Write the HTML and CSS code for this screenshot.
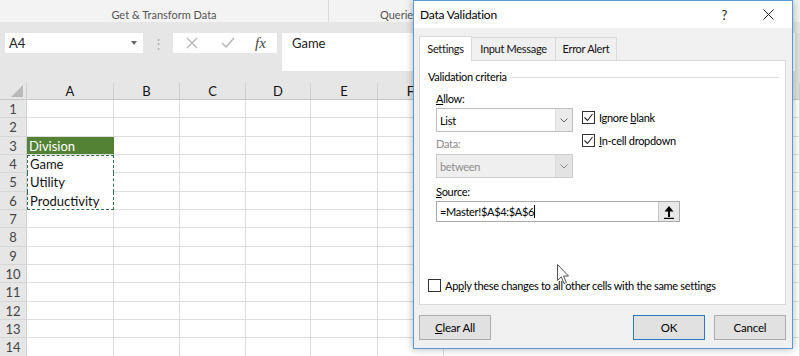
FILE: index.html
```html
<!DOCTYPE html>
<html lang="en">
<head>
<meta charset="UTF-8">
<meta name="viewport" content="width=device-width, initial-scale=1.0">
<title>Data Validation</title>
<link rel="stylesheet" href="styles.css">
</head>
<body>
<div class="ribbon">
    <div class="group">Get &amp; Transform Data</div>
    <div class="group queries">Queries</div>
</div>

<div class="formula-bar">
    <div class="name-box">A4<span class="caret"></span></div>
    <div class="grip">&#8942;</div>
    <div class="fx-box">
        <svg class="fx-icon" width="12" height="12" viewBox="0 0 12 12"><path d="M1 1 L11 11 M11 1 L1 11" stroke="#b5b5b5" stroke-width="1.3" fill="none"/></svg>
        <svg class="fx-icon" width="14" height="12" viewBox="0 0 14 12"><path d="M1 6 L5 10 L13 1" stroke="#b5b5b5" stroke-width="1.4" fill="none"/></svg>
        <span class="fx">fx</span>
    </div>
    <div class="formula-input">Game</div>
    <div class="fb-end"></div>
</div>

<div class="sheet">
    <div class="row head">
        <div class="rh corner"><span class="tri"></span></div>
        <div class="c a">A</div><div class="c b">B</div><div class="c b">C</div><div class="c d">D</div><div class="c e">E</div><div class="c b">F</div><div class="c rest"></div>
    </div>
    <div class="row"><div class="rh">1</div><div class="c a"></div><div class="c b"></div><div class="c b"></div><div class="c d"></div><div class="c e"></div><div class="c b"></div><div class="c rest"></div></div>
    <div class="row"><div class="rh">2</div><div class="c a"></div><div class="c b"></div><div class="c b"></div><div class="c d"></div><div class="c e"></div><div class="c b"></div><div class="c rest"></div></div>
    <div class="row"><div class="rh">3</div><div class="c a filled">Division</div><div class="c b"></div><div class="c b"></div><div class="c d"></div><div class="c e"></div><div class="c b"></div><div class="c rest"></div></div>
    <div class="row"><div class="rh">4</div><div class="c a ants top">Game</div><div class="c b"></div><div class="c b"></div><div class="c d"></div><div class="c e"></div><div class="c b"></div><div class="c rest"></div></div>
    <div class="row"><div class="rh">5</div><div class="c a ants">Utility</div><div class="c b"></div><div class="c b"></div><div class="c d"></div><div class="c e"></div><div class="c b"></div><div class="c rest"></div></div>
    <div class="row"><div class="rh">6</div><div class="c a ants bottom">Productivity</div><div class="c b"></div><div class="c b"></div><div class="c d"></div><div class="c e"></div><div class="c b"></div><div class="c rest"></div></div>
    <div class="row"><div class="rh">7</div><div class="c a"></div><div class="c b"></div><div class="c b"></div><div class="c d"></div><div class="c e"></div><div class="c b"></div><div class="c rest"></div></div>
    <div class="row"><div class="rh">8</div><div class="c a"></div><div class="c b"></div><div class="c b"></div><div class="c d"></div><div class="c e"></div><div class="c b"></div><div class="c rest"></div></div>
    <div class="row"><div class="rh">9</div><div class="c a"></div><div class="c b"></div><div class="c b"></div><div class="c d"></div><div class="c e"></div><div class="c b"></div><div class="c rest"></div></div>
    <div class="row"><div class="rh">10</div><div class="c a"></div><div class="c b"></div><div class="c b"></div><div class="c d"></div><div class="c e"></div><div class="c b"></div><div class="c rest"></div></div>
    <div class="row"><div class="rh">11</div><div class="c a"></div><div class="c b"></div><div class="c b"></div><div class="c d"></div><div class="c e"></div><div class="c b"></div><div class="c rest"></div></div>
    <div class="row"><div class="rh">12</div><div class="c a"></div><div class="c b"></div><div class="c b"></div><div class="c d"></div><div class="c e"></div><div class="c b"></div><div class="c rest"></div></div>
    <div class="row"><div class="rh">13</div><div class="c a"></div><div class="c b"></div><div class="c b"></div><div class="c d"></div><div class="c e"></div><div class="c b"></div><div class="c rest"></div></div>
    <div class="row"><div class="rh">14</div><div class="c a"></div><div class="c b"></div><div class="c b"></div><div class="c d"></div><div class="c e"></div><div class="c b"></div><div class="c rest"></div></div>
</div>

<div class="dialog">
    <div class="title-bar">
        <span class="title">Data Validation</span>
        <span class="help">?</span>
        <svg class="close" width="11" height="11" viewBox="0 0 11 11"><path d="M0.5 0.5 L10.5 10.5 M10.5 0.5 L0.5 10.5" stroke="#222" stroke-width="1" fill="none"/></svg>
    </div>

    <div class="tabs">
        <div class="tab active">Settings</div>
        <div class="tab msg">Input Message</div>
        <div class="tab err">Error Alert</div>
    </div>

    <div class="panel">
        <div class="legend">Validation criteria</div>
        <div class="fields">
            <div class="label"><u>A</u>llow:</div>
            <div class="allow-row">
                <div class="select">
                    <span class="value">List</span>
                    <span class="drop"><svg width="8" height="5" viewBox="0 0 8 5"><path d="M0.5 0.5 L4 4 L7.5 0.5" stroke="#666" fill="none"/></svg></span>
                </div>
                <div class="checks">
                    <div class="check"><span class="box"><svg width="11" height="11" viewBox="0 0 11 11"><path d="M1.5 5.5 L4.5 8.5 L9.5 2" stroke="#222" stroke-width="1.1" fill="none"/></svg></span><span>Ignore <u>b</u>lank</span></div>
                    <div class="check"><span class="box"><svg width="11" height="11" viewBox="0 0 11 11"><path d="M1.5 5.5 L4.5 8.5 L9.5 2" stroke="#222" stroke-width="1.1" fill="none"/></svg></span><span><u>I</u>n-cell dropdown</span></div>
                </div>
            </div>
            <div class="label off">Data:</div>
            <div class="select disabled">
                <span class="value">between</span>
                <span class="drop"><svg width="8" height="5" viewBox="0 0 8 5"><path d="M0.5 0.5 L4 4 L7.5 0.5" stroke="#888" fill="none"/></svg></span>
            </div>
            <div class="label src"><u>S</u>ource:</div>
            <div class="source">
                <span class="value">=Master!$A$4:$A$6<span class="text-cursor"></span></span>
                <span class="collapse"><svg width="12" height="14" viewBox="0 0 12 14"><path d="M6 12 L6 4" stroke="#000" stroke-width="2" fill="none"/><path d="M1.5 6.5 L6 1 L10.5 6.5 Z" fill="#000"/><path d="M1 13.4 L11 13.4" stroke="#000" stroke-width="1.2"/></svg></span>
            </div>
        </div>
        <div class="check apply"><span class="box"></span><span>Ap<u>p</u>ly these changes to all other cells with the same settings</span></div>
    </div>

    <div class="buttons">
        <button class="btn"><u>C</u>lear All</button>
        <span class="spacer"></span>
        <button class="btn default">OK</button>
        <button class="btn">Cancel</button>
    </div>

    <svg class="pointer" width="13" height="21" viewBox="0 0 13 21"><path d="M0.5 0.5 L0.5 16.5 L4.3 12.8 L7 19.5 L9.3 18.5 L6.6 12 L11.5 12 Z" fill="#fff" stroke="#555" stroke-width="1"/></svg>
</div>
</body>
</html>
```

FILE: styles.css
```css
* {
    box-sizing: border-box;
}

body {
    margin: 0;
    width: 800px;
    height: 356px;
    overflow: hidden;
    position: relative;
    background: #fff;
    font-family: Lato, "Noto Sans", sans-serif;
}

/* ribbon strip */
.ribbon {
    height: 22px;
    background: #f3f3f3;
    display: flex;
    font-size: 11px;
    color: #555;
}

.group {
    width: 329px;
    border-right: 1px solid #dadada;
    text-align: center;
    padding-top: 7px;
    line-height: 15px;
}

.group.queries {
    width: auto;
    flex: 1;
    border: none;
    text-align: left;
    padding-left: 51px;
}

/* formula bar */
.formula-bar {
    height: 61px;
    background: #e6e6e6;
    display: flex;
    align-items: flex-start;
    padding: 11px 0 0 5px;
    font-size: 13px;
}

.name-box {
    width: 138px;
    height: 20px;
    background: #fff;
    padding-left: 4px;
    line-height: 20px;
    color: #222;
    position: relative;
}

.caret {
    position: absolute;
    right: 6px;
    top: 8px;
    border-left: 3.5px solid transparent;
    border-right: 3.5px solid transparent;
    border-top: 4px solid #666;
}

.grip {
    width: 30px;
    text-align: center;
    color: #b0b0b0;
    line-height: 20px;
}

.fx-box {
    width: 104px;
    height: 20px;
    background: #fff;
    display: flex;
    align-items: center;
    padding-left: 13px;
    gap: 23px;
}

.fx {
    font-family: "Liberation Serif", serif;
    font-style: italic;
    font-size: 15px;
    color: #444;
    margin-left: -3px;
}

.formula-input {
    width: 513px;
    height: 38px;
    margin-left: 5px;
    background: #fff;
    padding-left: 10px;
    line-height: 20px;
    color: #222;
}

.fb-end {
    width: 5px;
    height: 67px;
    background: #e0e0e0;
}

/* grid */
.sheet {
    font-size: 13px;
}

.row {
    display: flex;
    height: 18.33px;
}

.row.head {
    height: 17px;
    background: #e6e6e6;
    color: #444;
}

.rh {
    flex: none;
    width: 27px;
    background: #e6e6e6;
    border-right: 1px solid #cfcfcf;
    border-bottom: 1px solid #d6d6d6;
    text-align: center;
    color: #444;
    line-height: 18px;
}

.head .rh {
    border-bottom: 1px solid #c6c6c6;
}

.corner {
    position: relative;
}

.tri {
    position: absolute;
    right: 3px;
    bottom: 2px;
    border-left: 12px solid transparent;
    border-bottom: 12px solid #b9b9b9;
}

.c {
    flex: none;
    border-right: 1px solid #dedede;
    border-bottom: 1px solid #dedede;
    padding-left: 2px;
    line-height: 18px;
    color: #111;
    white-space: nowrap;
    overflow: hidden;
}

.head .c {
    text-align: center;
    border-right: 1px solid #cfcfcf;
    border-bottom: 1px solid #c6c6c6;
    line-height: 17px;
    padding: 0;
}

.c.a { width: 87px; }
.c.b { width: 66px; }
.c.d { width: 65px; }
.c.e { width: 67px; }
.c.rest { flex: 1; }

.c.filled {
    background: #548235;
    color: #fff;
    border-right-color: #548235;
}

.c.ants {
    border-left: 1px dashed #2f7048;
    border-right: 1px dashed #2f7048;
    border-bottom: none;
}

.c.ants.top {
    border-top: 1px dashed #2f7048;
    line-height: 17px;
}

.c.ants.bottom {
    border-bottom: 1px dashed #2f7048;
}

/* dialog */
.dialog {
    position: absolute;
    left: 413px;
    top: 0;
    width: 380px;
    height: 349px;
    background: #f0f0f0;
    border: 1px solid #5a9bd6;
    box-shadow: 0 0 8px rgba(0, 0, 0, 0.3);
    font-size: 11px;
    letter-spacing: -0.3px;
    color: #000;
}

.title-bar {
    height: 27px;
    background: #fff;
    display: flex;
    align-items: center;
    padding-left: 6px;
    font-size: 12px;
    letter-spacing: -0.2px;
}

.title {
    flex: 1;
}

.help {
    font-size: 13px;
    margin-right: 36px;
    color: #222;
}

.close {
    margin-right: 18px;
}

.tabs {
    display: flex;
    align-items: flex-end;
    height: 32px;
    padding-left: 5px;
}

.tab {
    height: 23px;
    line-height: 21px;
    text-align: center;
    border: 1px solid #d9d9d9;
    border-bottom: none;
    background: #f0f0f0;
    color: #111;
}

.tab + .tab {
    border-left: none;
}

.tab.active {
    width: 53px;
    height: 25px;
    line-height: 24px;
    background: #fff;
    margin-bottom: -1px;
    position: relative;
}

.tab.msg { width: 84px; }
.tab.err { width: 61px; }

.panel {
    margin: 0 6px 0 5px;
    height: 245px;
    background: #fff;
    border: 1px solid #d9d9d9;
    padding-top: 8px;
}

.legend {
    display: flex;
    align-items: center;
    gap: 3px;
    padding-left: 8px;
    margin-right: 6px;
    line-height: 16px;
}

.legend::after {
    content: "";
    flex: 1;
    height: 1px;
    background: #dcdcdc;
}

.fields {
    padding-left: 16px;
}

.label {
    line-height: 16px;
    margin-top: 6px;
}

.label.off {
    color: #8d8d8d;
    margin-top: 4px;
}

.label.src {
    margin-top: 6px;
}

.allow-row {
    display: flex;
    height: 24px;
    margin-top: 1px;
}

.select {
    width: 137px;
    height: 24px;
    border: 1px solid #bdbdbd;
    background: #fff;
    display: flex;
    align-items: center;
}

.select.disabled {
    margin-top: 2px;
    background: #efefef;
    border-color: #cccccc;
    color: #8d8d8d;
}

.value {
    flex: 1;
    padding-left: 3px;
}

.drop {
    width: 17px;
    height: 22px;
    background: #ebebeb;
    border-left: 1px solid #dcdcdc;
    display: flex;
    align-items: center;
    justify-content: center;
}

.disabled .drop {
    background: #e3e3e3;
}

.checks {
    align-self: flex-start;
    margin-left: 9px;
    display: flex;
    flex-direction: column;
    gap: 5px;
}

.check {
    flex: none;
    display: flex;
    align-items: center;
    height: 18px;
}

.box {
    flex: none;
    width: 13px;
    height: 13px;
    border: 1px solid #333;
    background: #fff;
    margin-right: 4px;
    display: flex;
    align-items: center;
    justify-content: center;
}

.source {
    width: 244px;
    height: 21px;
    margin-top: 1px;
    border: 1px solid #aaaaaa;
    display: flex;
    align-items: center;
}

.text-cursor {
    display: inline-block;
    width: 1px;
    height: 13px;
    background: #000;
    vertical-align: -2px;
}

.collapse {
    width: 21px;
    height: 19px;
    background: #e8e8e8;
    border-left: 1px solid #c8c8c8;
    display: flex;
    align-items: center;
    justify-content: center;
}

.check.apply {
    margin-top: 54px;
    padding-left: 8px;
}

.buttons {
    display: flex;
    gap: 9px;
    margin: 10px 6px 0 5px;
}

.spacer {
    flex: 1;
}

.btn {
    width: 72px;
    height: 25px;
    font-family: inherit;
    font-size: 11.5px;
    letter-spacing: -0.2px;
    background: #e1e1e1;
    border: 1px solid #adadad;
    color: #000;
    padding: 0;
}

.btn.default {
    border-color: #2a78c2;
}

.pointer {
    position: absolute;
    left: 143px;
    top: 263px;
}
```
